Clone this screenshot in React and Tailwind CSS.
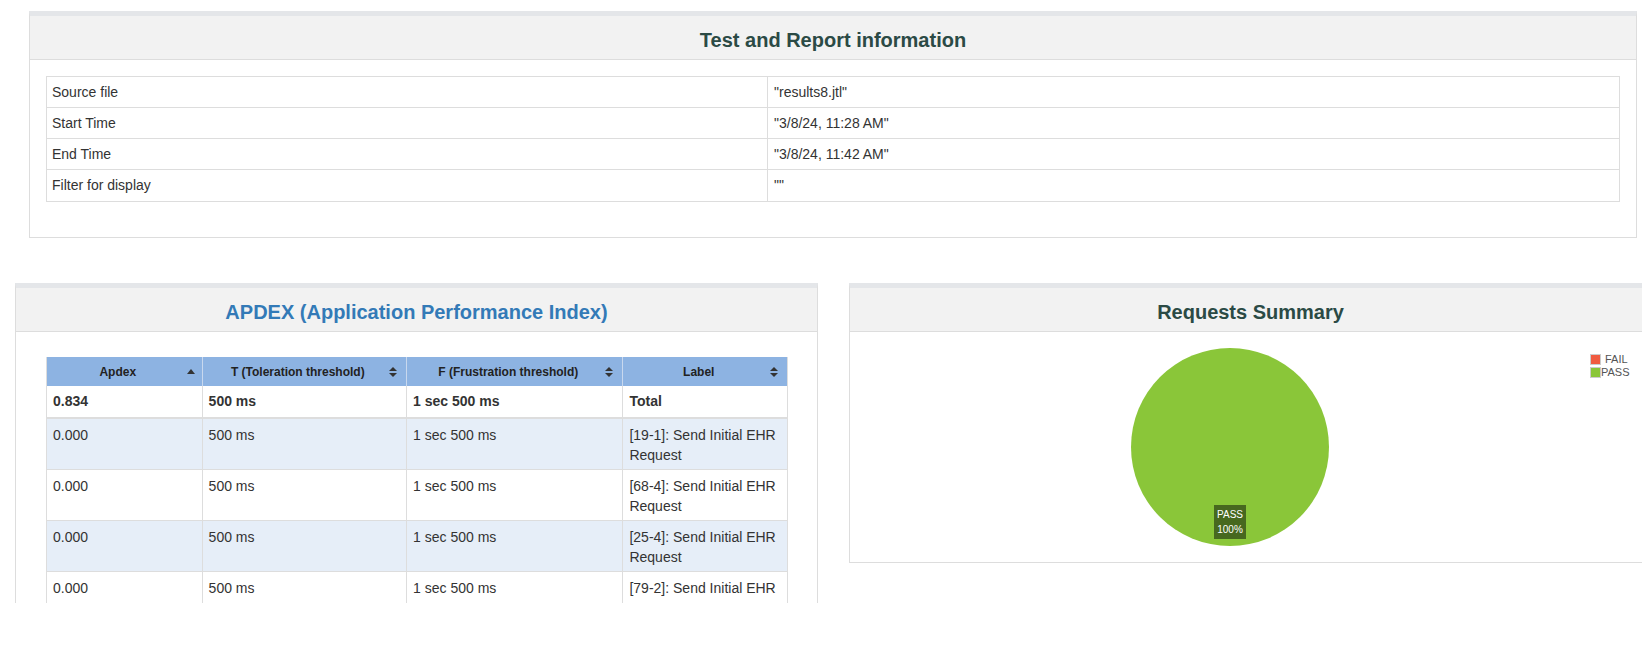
import React from "react";

const info = [
  ["Source file", "\"results8.jtl\""],
  ["Start Time", "\"3/8/24, 11:28 AM\""],
  ["End Time", "\"3/8/24, 11:42 AM\""],
  ["Filter for display", "\"\""],
];

const apdexRows = [
  { apdex: "0.000", t: "500 ms", f: "1 sec 500 ms", label: "[19-1]: Send Initial EHR Request" },
  { apdex: "0.000", t: "500 ms", f: "1 sec 500 ms", label: "[68-4]: Send Initial EHR Request" },
  { apdex: "0.000", t: "500 ms", f: "1 sec 500 ms", label: "[25-4]: Send Initial EHR Request" },
  { apdex: "0.000", t: "500 ms", f: "1 sec 500 ms", label: "[79-2]: Send Initial EHR Request" },
];

const cols = ["w-[156px]", "w-[205px]", "w-[217px]", "w-[164px]"];

const SortUp = () => (
  <svg width="8" height="5" viewBox="0 0 8 5" className="absolute right-[7px] top-[12px]">
    <path d="M0 5 L4 0 L8 5 Z" fill="#333" />
  </svg>
);

const SortBoth = () => (
  <svg width="8" height="10" viewBox="0 0 8 10" className="absolute right-[9px] top-[10px]">
    <path d="M0 4 L4 0 L8 4 Z M0 6 L8 6 L4 10 Z" fill="#333" />
  </svg>
);

const PanelHeading = ({ title, blue }) => (
  <div className="h-[44px] bg-[#f2f2f2] border-b border-[#dddddd] flex items-center justify-center pt-[4px]">
    <h3
      className={
        "text-[20px] font-bold leading-none " +
        (blue ? "text-[#337ab7]" : "text-[#2b4a45]")
      }
    >
      {title}
    </h3>
  </div>
);

export default function App() {
  return (
    <div className="w-[1642px] h-[650px] overflow-hidden bg-white pt-[11px] font-['Liberation_Sans',Arial,sans-serif] text-[#333]">
      {/* test and report information */}
      <div className="ml-[29px] w-[1608px] border border-[#dddddd] border-t-[5px] border-t-[#e4e6e9]">
        <PanelHeading title="Test and Report information" />
        <div className="pt-[16px] px-[16px] pb-[35px]">
          <div className="border border-[#dddddd] text-[14px]">
            {info.map(([k, v], i) => (
              <div
                key={k}
                className={
                  "flex h-[31px] " + (i < info.length - 1 ? "border-b border-[#dddddd]" : "")
                }
              >
                <div className="w-[721px] border-r border-[#dddddd] px-[5px] flex items-center">{k}</div>
                <div className="flex-1 px-[6px] flex items-center">{v}</div>
              </div>
            ))}
          </div>
        </div>
      </div>

      <div className="flex items-start mt-[45px] ml-[15px] gap-[31px]">
        {/* apdex */}
        <div className="w-[803px] shrink-0 h-[320px] overflow-hidden border-x border-[#dddddd] border-t-[5px] border-t-[#e4e6e9]">
          <PanelHeading title="APDEX (Application Performance Index)" blue />
          <div className="pt-[25px] px-[30px]">
            <div className="w-[742px] border-x border-[#dddddd]">
              <div className="flex h-[29px] bg-[#8db3e2] text-[12px] font-bold text-[#222]">
                {["Apdex", "T (Toleration threshold)", "F (Frustration threshold)", "Label"].map((h, i) => (
                  <div
                    key={h}
                    className={
                      cols[i] +
                      " relative flex items-center justify-center pl-[5px] pr-[18px] " +
                      (i < 3 ? "border-r border-[#c8d8ee]" : "")
                    }
                  >
                    {h}
                    {i === 0 ? <SortUp /> : <SortBoth />}
                  </div>
                ))}
              </div>
              <div className="flex h-[33px] border-b-2 border-[#dddddd] font-bold text-[14px] bg-white">
                {["0.834", "500 ms", "1 sec 500 ms", "Total"].map((c, i) => (
                  <div
                    key={i}
                    className={cols[i] + " px-[6px] flex items-center " + (i < 3 ? "border-r border-[#dddddd]" : "")}
                  >
                    {c}
                  </div>
                ))}
              </div>
              {apdexRows.map((r, idx) => (
                <div
                  key={idx}
                  className={
                    "flex h-[51px] border-b border-[#dddddd] text-[14px] leading-[20px] " +
                    (idx % 2 === 0 ? "bg-[#e6eef8]" : "bg-white")
                  }
                >
                  {[r.apdex, r.t, r.f, r.label].map((c, i) => (
                    <div
                      key={i}
                      className={cols[i] + " px-[6px] pt-[6px] " + (i < 3 ? "border-r border-[#dddddd]" : "")}
                    >
                      {c}
                    </div>
                  ))}
                </div>
              ))}
            </div>
          </div>
        </div>

        {/* requests summary */}
        <div className="w-[803px] shrink-0 border border-[#dddddd] border-t-[5px] border-t-[#e4e6e9]">
          <PanelHeading title="Requests Summary" />
          <div className="relative h-[230px]">
            <svg width="803" height="230" className="absolute left-0 top-0">
              <circle cx="380" cy="115" r="99" fill="#8ac639" />
            </svg>
            <div className="absolute left-[364px] top-[173px] w-[32px] h-[34px] bg-[#47681f] text-white text-[10px] leading-[15px] flex flex-col items-center justify-center">
              <span>PASS</span>
              <span>100%</span>
            </div>
            <div className="absolute left-[740px] top-[21px] text-[11px] leading-[13px] text-[#545454]">
              <div className="flex items-center">
                <span className="w-[11px] h-[11px] border border-[#cccccc] mr-[4px] bg-[#f05b41]" />
                FAIL
              </div>
              <div className="flex items-center">
                <span className="w-[11px] h-[11px] border border-[#cccccc] bg-[#8ac639]" />
                PASS
              </div>
            </div>
          </div>
        </div>
      </div>
    </div>
  );
}
